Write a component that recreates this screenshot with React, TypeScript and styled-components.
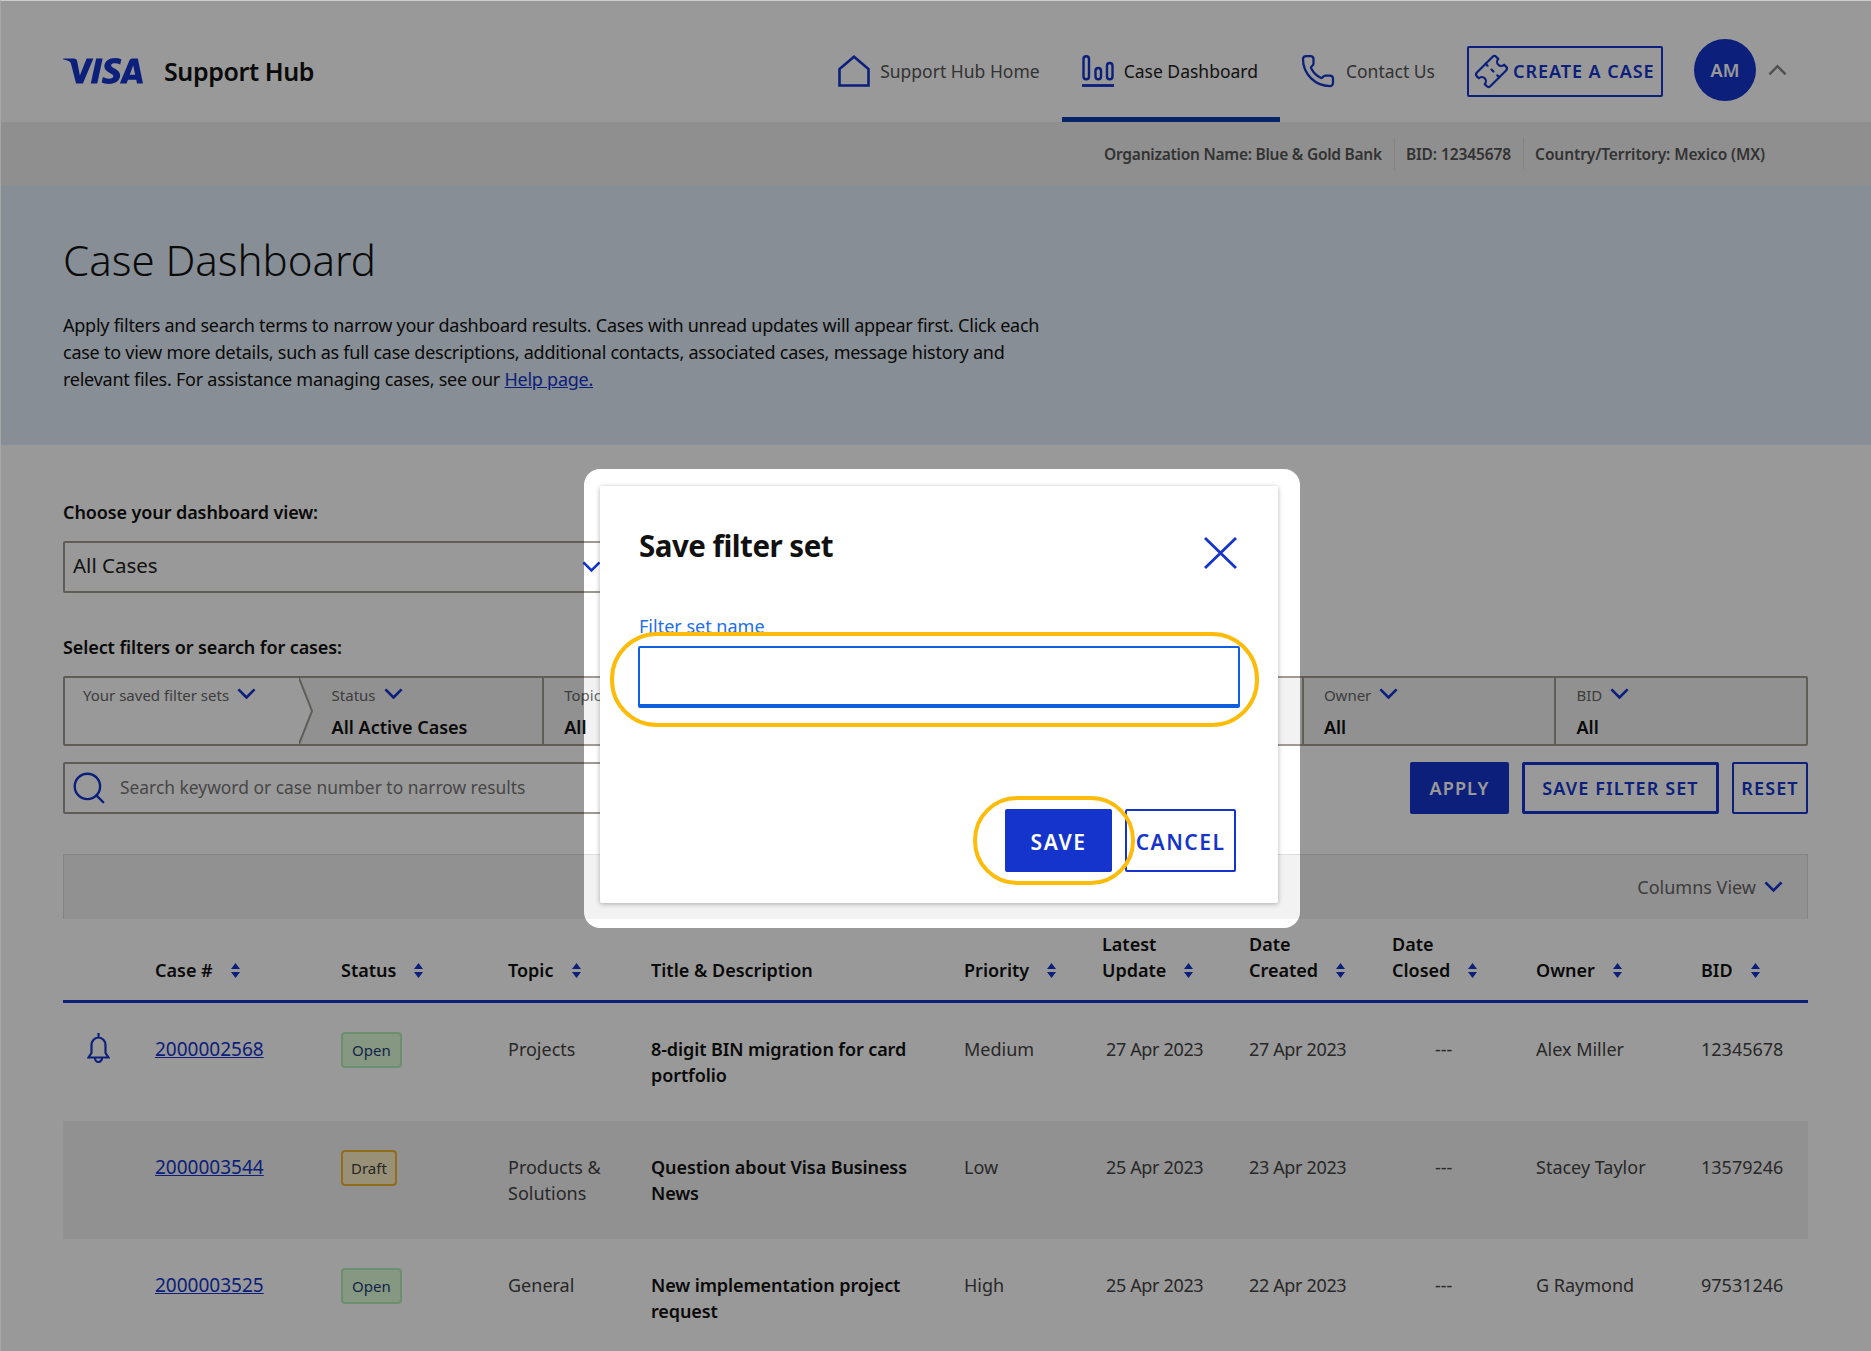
import React from 'react';
import styled, { createGlobalStyle } from 'styled-components';
import { Search, Phone, Ticket } from 'lucide-react';
import { SiVisa } from 'react-icons/si';

const Global = createGlobalStyle`
  html, body { margin: 0; padding: 0; background: #fff; }
  body { font-family: "Noto Sans", "Liberation Sans", sans-serif; color: #1a1a1a; }
  * { box-sizing: border-box; }
`;

const Page = styled.div`
  position: relative;
  width: 1871px;
  height: 1351px;
  overflow: hidden;
  background: #fff;
  &::after {
    content: '';
    position: absolute;
    inset: 0;
    z-index: 20;
    pointer-events: none;
    border-top: 1px solid #ccc;
    border-left: 1px solid #a6a6a6;
  }
`;

const Header = styled.header`
  height: 122px;
  display: flex;
  align-items: center;
  padding: 20px 84px 0 63px;
  background: #fff;
`;
const Brand = styled.div`
  display: flex;
  align-items: center;
  gap: 21px;
  margin-right: auto;
  color: #1434cb;
`;
const BrandName = styled.span`
  font-size: 25px;
  font-weight: 600;
  color: #111;
  letter-spacing: -0.4px;
`;
const NavItem = styled.a<{ $active?: boolean }>`
  height: 102px;
  align-self: flex-end;
  display: flex;
  align-items: center;
  gap: 10px;
  padding: 5px 22px 0 20px;
  font-size: 17.5px;
  color: ${p => (p.$active ? '#222' : '#555')};
  border-bottom: 5px solid ${p => (p.$active ? '#0a3fb0' : 'transparent')};
  svg { color: #1434cb; flex: none; }
`;
const CreateBtn = styled.button`
  width: 196px;
  height: 51px;
  margin: 0 31px 0 10px;
  display: flex;
  align-items: center;
  gap: 5px;
  padding: 0 0 0 6px;
  background: #fff;
  border: 2px solid #1434cb;
  border-radius: 2px;
  color: #1434cb;
  font: 600 18px "Noto Sans", sans-serif;
  letter-spacing: 0.95px;
  white-space: nowrap;
  svg { transform: rotate(-45deg); flex: none; }
`;
const Avatar = styled.div`
  width: 62px;
  height: 62px;
  margin-top: -2px;
  border-radius: 50%;
  background: #1434cb;
  color: #fff;
  display: flex;
  align-items: center;
  justify-content: center;
  font-size: 18px;
  font-weight: 600;
`;
const Caret = styled.span`
  margin: -2px 0 0 12px;
  display: flex;
  color: #888;
`;

const InfoBar = styled.div`
  height: 63px;
  background: #eee;
  display: flex;
  align-items: center;
  justify-content: flex-end;
  padding-right: 106px;
  font-size: 15.5px;
  letter-spacing: -0.1px;
  font-weight: 600;
  color: #555;
`;
const InfoItem = styled.span`
  height: 32px;
  display: flex;
  align-items: center;
  padding: 0 12px 0 11px;
  border-left: 1px solid #ddd;
  &:first-child { border-left: 0; letter-spacing: -0.25px; }
  &:last-child { padding-right: 0; }
`;

const Hero = styled.section`
  height: 260px;
  background: #e1edf8;
  padding: 46px 63px 0;
`;
const Title = styled.h1`
  margin: 0 0 23px;
  font-size: 42px;
  line-height: 58px;
  font-weight: 300;
  color: #111;
`;
const Lead = styled.p`
  margin: 0;
  width: 985px;
  font-size: 18px;
  letter-spacing: -0.25px;
  line-height: 27px;
  color: #111;
  a { color: #1434cb; text-decoration: underline; }
`;

const Main = styled.main`
  padding: 55px 63px 0;
`;
const SectionLabel = styled.div`
  font-size: 18px;
  letter-spacing: -0.1px;
  font-weight: 600;
  line-height: 24px;
  color: #111;
`;
const ViewSelect = styled.div`
  width: 550px;
  height: 52px;
  margin: 17px 0 42px;
  display: flex;
  align-items: center;
  justify-content: space-between;
  padding: 0 10px 4px 8px;
  border: 2px solid #a09a93;
  border-radius: 2px;
  font-size: 20.5px;
  color: #222;
  svg { color: #1434cb; margin-top: 4px; }
`;
const FilterBar = styled.div`
  height: 70px;
  margin-top: 17px;
  display: flex;
  border: 2px solid #a09a93;
  border-radius: 2px;
`;
const FilterFirst = styled.div`
  position: relative;
  z-index: 1;
  width: 234px;
  padding: 5px 0 0 18px;
  background: #fff;
  > svg.arrow { position: absolute; top: 0; right: -14px; color: #a09a93; }
`;
const FilterCell = styled.div<{ $w: number; $pad?: number; $sep?: boolean }>`
  width: ${p => p.$w}px;
  padding: 5px 0 0 ${p => p.$pad ?? 20}px;
  background: #f2f2f2;
  border-left: ${p => (p.$sep ? '2px solid #a09a93' : '0')};
`;
const FilterLabel = styled.div`
  height: 24px;
  display: flex;
  align-items: center;
  gap: 8px;
  font-size: 15px;
  color: #666;
  svg { color: #1434cb; margin-top: -3px; }
`;
const FilterValue = styled.div`
  margin-top: 8px;
  font-size: 18px;
  line-height: 25px;
  font-weight: 600;
  color: #111;
`;
const ActionRow = styled.div`
  height: 52px;
  margin-top: 16px;
  display: flex;
  align-items: stretch;
`;
const SearchBox = styled.div`
  width: 1100px;
  margin-right: auto;
  display: flex;
  align-items: center;
  gap: 12px;
  padding: 0 0 2px 5px;
  border: 2px solid #a09a93;
  border-radius: 2px;
  font-size: 17.4px;
  color: #777;
  svg { color: #1434cb; margin-top: 2px; }
`;
const Button = styled.button<{ $kind: 'solid' | 'thick' | 'thin' }>`
  margin-left: ${p => (p.$kind === 'solid' ? 0 : 13)}px;
  width: ${p => (p.$kind === 'solid' ? 99 : p.$kind === 'thick' ? 197 : 76)}px;
  background: ${p => (p.$kind === 'solid' ? '#1434cb' : '#fff')};
  color: ${p => (p.$kind === 'solid' ? '#fff' : '#1434cb')};
  border: ${p => (p.$kind === 'thin' ? 2 : 3)}px solid #1434cb;
  border-radius: 2px;
  padding: 0;
  font: 600 18px "Noto Sans", sans-serif;
  letter-spacing: 1.1px;
`;

const TableBar = styled.div`
  height: 65px;
  margin-top: 40px;
  display: flex;
  align-items: center;
  justify-content: flex-end;
  gap: 8px;
  padding-right: 24px;
  background: #f2f2f2;
  border: 1px solid #ddd;
  border-bottom: 0;
  font-size: 18px;
  color: #666;
  svg { color: #1434cb; }
`;
const COLS = '92px 186px 167px 143px 313px 138px 147px 143px 144px 165px 107px';
const HeadRow = styled.div`
  display: grid;
  grid-template-columns: ${COLS};
  height: 84px;
  padding-bottom: 17px;
  border-bottom: 3px solid #1434cb;
`;
const HeadCell = styled.div`
  display: flex;
  align-items: flex-end;
  gap: 18px;
  font-size: 18px;
  line-height: 26px;
  font-weight: 600;
  color: #111;
  svg { margin-bottom: 5px; flex: none; }
`;
const Row = styled.div<{ $alt?: boolean }>`
  display: grid;
  grid-template-columns: ${COLS};
  height: 118.2px;
  padding-top: 33px;
  background: ${p => (p.$alt ? '#f2f2f2' : '#fff')};
`;
const Cell = styled.div<{ $bold?: boolean; $pad?: number; $tight?: boolean }>`
  font-size: 18px;
  line-height: 26px;
  letter-spacing: ${p => (p.$tight ? -0.35 : p.$bold ? -0.1 : 0)}px;
  font-weight: ${p => (p.$bold ? 600 : 400)};
  color: ${p => (p.$bold ? '#111' : '#444')};
  padding-left: ${p => p.$pad ?? 0}px;
  padding-right: 20px;
`;
const BellCell = styled.div`
  padding: 0 0 0 24px;
  margin-top: -3px;
  color: #1434cb;
`;
const CaseLink = styled.a`
  font-size: 19px;
  line-height: 26px;
  color: #1434cb;
  text-decoration: underline;
`;
const Badge = styled.span<{ $tone: 'open' | 'draft' }>`
  display: inline-flex;
  align-items: center;
  height: 36px;
  margin-top: -8px;
  padding: 0 ${p => (p.$tone === 'open' ? 9 : 8)}px;
  border: 2px solid ${p => (p.$tone === 'open' ? '#b5eeb9' : '#f0b42d')};
  border-radius: 4px;
  background: ${p => (p.$tone === 'open' ? '#dffcd9' : '#fff2c6')};
  color: ${p => (p.$tone === 'open' ? '#243e78' : '#3d3d3d')};
  font-size: 15px;
`;

const Spotlight = styled.div`
  position: absolute;
  z-index: 10;
  left: 584px;
  top: 469px;
  width: 716px;
  height: 459px;
  padding: 17px 22px 25px 16px;
  border-radius: 16px;
  box-shadow: 0 0 0 3000px rgba(0, 0, 0, 0.4);
`;
const Card = styled.div`
  height: 100%;
  display: flex;
  flex-direction: column;
  padding: 38px 42px 0 39px;
  background: #fff;
  border-radius: 2px;
  box-shadow: 0 1px 5px rgba(0, 0, 0, 0.3);
`;
const CardHead = styled.div`
  display: flex;
  align-items: flex-start;
  justify-content: space-between;
  height: 90px;
  svg { color: #1434cb; margin-top: 13px; margin-right: -1px; }
`;
const CardTitle = styled.h2`
  margin: 0;
  font-size: 29.5px;
  line-height: 44px;
  font-weight: 700;
  letter-spacing: -0.5px;
  color: #111;
`;
const FieldLabel = styled.label`
  display: block;
  height: 24px;
  font-size: 18px;
  line-height: 24px;
  color: #1f6fe8;
`;
const InputRing = styled.div`
  position: relative;
  width: 649px;
  height: 95px;
  margin: -6px 0 0 -29px;
  padding: 10px 15px 14px 24px;
  background: #fff;
  border: 4px solid #fdbb0a;
  border-radius: 47px;
`;
const TextInput = styled.input`
  display: block;
  width: 602px;
  height: 62px;
  border: 2px solid #0f5fe0;
  border-bottom-width: 4px;
  border-radius: 2px;
  outline: 0;
  background: #fff;
`;
const CardActions = styled.div`
  margin-top: 82px;
  display: flex;
  justify-content: flex-end;
  gap: 13px;
`;
const SaveWrap = styled.div`
  position: relative;
  display: flex;
`;
const SaveRing = styled.span`
  position: absolute;
  left: -32px;
  right: -23px;
  top: -13px;
  bottom: -13px;
  border: 4px solid #fdbb0a;
  border-radius: 44px;
`;
const CardButton = styled.button<{ $primary?: boolean }>`
  width: ${p => (p.$primary ? 107 : 111)}px;
  height: 63px;
  padding: 2px 0 0;
  background: ${p => (p.$primary ? '#1434cb' : '#fff')};
  color: ${p => (p.$primary ? '#fff' : '#1434cb')};
  border: 2px solid #1434cb;
  border-radius: 2px;
  font: 600 21px "Noto Sans", sans-serif;
  letter-spacing: 1.5px;
`;

const Chevron = ({ size = 19 }: { size?: number }) => (
  <svg width={size} height={size * 0.6} viewBox="0 0 20 12" fill="none" stroke="currentColor" strokeWidth="2.8">
    <path d="M1.5 1.5 10 10 18.5 1.5" />
  </svg>
);
const CaretUp = () => (
  <svg width="19" height="12" viewBox="0 0 20 12" fill="none" stroke="currentColor" strokeWidth="2.6">
    <path d="M1.5 10.500 10 2 18.500 10.500" />
  </svg>
);
const Sort = () => (
  <svg width="9" height="15" viewBox="0 0 9 15" fill="#1434cb">
    <path d="M4.5 0 9 6H0zM0 9h9l-4.500 6z" />
  </svg>
);
const HomeIcon = () => (
  <svg width="32" height="32" viewBox="0 0 32 32" fill="none" stroke="currentColor" strokeWidth="2.6">
    <path d="M1.500 30.500V14L16 1.700 30.500 14v16.500z" />
  </svg>
);
const ChartIcon = () => (
  <svg width="32" height="32" viewBox="0 0 32 32" fill="none" stroke="currentColor" strokeWidth="2.4">
    <rect x="1.500" y="1.200" width="5.500" height="23" rx="2.700" />
    <rect x="13.500" y="13" width="5.500" height="11.200" rx="2.700" />
    <rect x="25" y="8" width="5.500" height="16.200" rx="2.700" />
    <path d="M0 30.500h32" strokeWidth="2.800" />
  </svg>
);
const BellIcon = () => (
  <svg width="23" height="31" viewBox="0 0 23 31" fill="none" stroke="currentColor" strokeWidth="2.200">
    <path d="M11.500 0v4M4.500 12a7 7.500 0 0 1 14 0v8l3 4.500H1.500l3-4.500z" />
    <path d="M8 25a3.500 4 0 0 0 7 0" />
  </svg>
);
const CloseIcon = () => (
  <svg width="33" height="32" viewBox="0 0 33 32" fill="none" stroke="currentColor" strokeWidth="2.800">
    <path d="M1 1l31 30M32 1 1 31" />
  </svg>
);

type RowData = { id: string; status: 'Open' | 'Draft'; topic: string; title: string; priority: string; update: string; created: string; owner: string; bid: string; bell?: boolean };
const rows: RowData[] = [
  { id: '2000002568', status: 'Open', topic: 'Projects', title: '8-digit BIN migration for card portfolio', priority: 'Medium', update: '27 Apr 2023', created: '27 Apr 2023', owner: 'Alex Miller', bid: '12345678', bell: true },
  { id: '2000003544', status: 'Draft', topic: 'Products & Solutions', title: 'Question about Visa Business News', priority: 'Low', update: '25 Apr 2023', created: '23 Apr 2023', owner: 'Stacey Taylor', bid: '13579246' },
  { id: '2000003525', status: 'Open', topic: 'General', title: 'New implementation project request', priority: 'High', update: '25 Apr 2023', created: '22 Apr 2023', owner: 'G Raymond', bid: '97531246' },
];

const heads: { label: React.ReactNode; sort: boolean }[] = [
  { label: '', sort: false },
  { label: 'Case #', sort: true },
  { label: 'Status', sort: true },
  { label: 'Topic', sort: true },
  { label: 'Title & Description', sort: false },
  { label: 'Priority', sort: true },
  { label: <>Latest<br />Update</>, sort: true },
  { label: <>Date<br />Created</>, sort: true },
  { label: <>Date<br />Closed</>, sort: true },
  { label: 'Owner', sort: true },
  { label: 'BID', sort: true },
];

export default function App() {
  return (
    <Page>
      <Global />
      <Header>
        <Brand>
          <SiVisa size={80} viewBox="0 7.200 24 9.600" height={32} />
          <BrandName>Support Hub</BrandName>
        </Brand>
        <NavItem><HomeIcon />Support Hub Home</NavItem>
        <NavItem $active><ChartIcon />Case Dashboard</NavItem>
        <NavItem><Phone size={36} strokeWidth={1.500} />Contact Us</NavItem>
        <CreateBtn><Ticket size={33} strokeWidth={1.600} />CREATE A CASE</CreateBtn>
        <Avatar>AM</Avatar>
        <Caret><CaretUp /></Caret>
      </Header>
      <InfoBar>
        <InfoItem>Organization Name: Blue &amp; Gold Bank</InfoItem>
        <InfoItem>BID: 12345678</InfoItem>
        <InfoItem>Country/Territory: Mexico (MX)</InfoItem>
      </InfoBar>
      <Hero>
        <Title>Case Dashboard</Title>
        <Lead>
          Apply filters and search terms to narrow your dashboard results. Cases with unread updates will appear first. Click each case to view more details, such as full case descriptions, additional contacts, associated cases, message history and relevant files. For assistance managing cases, see our <a href="#help">Help page.</a>
        </Lead>
      </Hero>
      <Main>
        <SectionLabel>Choose your dashboard view:</SectionLabel>
        <ViewSelect>All Cases<Chevron /></ViewSelect>
        <SectionLabel>Select filters or search for cases:</SectionLabel>
        <FilterBar>
          <FilterFirst>
            <FilterLabel>Your saved filter sets<Chevron /></FilterLabel>
            <svg className="arrow" width="14" height="66" viewBox="0 0 14 66" fill="#fff" stroke="currentColor" strokeWidth="2">
              <path d="M0 0l13 33L0 66" />
            </svg>
          </FilterFirst>
          <FilterCell $w={244} $pad={33}>
            <FilterLabel>Status<Chevron /></FilterLabel>
            <FilterValue>All Active Cases</FilterValue>
          </FilterCell>
          <FilterCell $w={253} $sep>
            <FilterLabel>Topic<Chevron /></FilterLabel>
            <FilterValue>All</FilterValue>
          </FilterCell>
          <FilterCell $w={254} $sep />
          <FilterCell $w={254} $sep />
          <FilterCell $w={253} $sep>
            <FilterLabel>Owner<Chevron /></FilterLabel>
            <FilterValue>All</FilterValue>
          </FilterCell>
          <FilterCell $w={252} $sep>
            <FilterLabel>BID<Chevron /></FilterLabel>
            <FilterValue>All</FilterValue>
          </FilterCell>
        </FilterBar>
        <ActionRow>
          <SearchBox><Search size={38} strokeWidth={1.500} />Search keyword or case number to narrow results</SearchBox>
          <Button $kind="solid">APPLY</Button>
          <Button $kind="thick">SAVE FILTER SET</Button>
          <Button $kind="thin">RESET</Button>
        </ActionRow>
        <TableBar>Columns View<Chevron /></TableBar>
        <HeadRow>
          {heads.map((h, i) => (
            <HeadCell key={i}>
              {h.label && <span>{h.label}</span>}
              {h.sort && <Sort />}
            </HeadCell>
          ))}
        </HeadRow>
        {rows.map((r, i) => (
          <Row key={r.id} $alt={i === 1}>
            <BellCell>{r.bell && <BellIcon />}</BellCell>
            <Cell><CaseLink href="#case">{r.id}</CaseLink></Cell>
            <Cell><Badge $tone={r.status === 'Open' ? 'open' : 'draft'}>{r.status}</Badge></Cell>
            <Cell>{r.topic}</Cell>
            <Cell $bold>{r.title}</Cell>
            <Cell>{r.priority}</Cell>
            <Cell $pad={4} $tight>{r.update}</Cell>
            <Cell $tight>{r.created}</Cell>
            <Cell $pad={43}>---</Cell>
            <Cell>{r.owner}</Cell>
            <Cell>{r.bid}</Cell>
          </Row>
        ))}
      </Main>
      <Spotlight>
        <Card>
          <CardHead>
            <CardTitle>Save filter set</CardTitle>
            <CloseIcon />
          </CardHead>
          <FieldLabel>Filter set name</FieldLabel>
          <InputRing><TextInput aria-label="Filter set name" /></InputRing>
          <CardActions>
            <SaveWrap>
              <CardButton $primary>SAVE</CardButton>
              <SaveRing />
            </SaveWrap>
            <CardButton>CANCEL</CardButton>
          </CardActions>
        </Card>
      </Spotlight>
    </Page>
  );
}
